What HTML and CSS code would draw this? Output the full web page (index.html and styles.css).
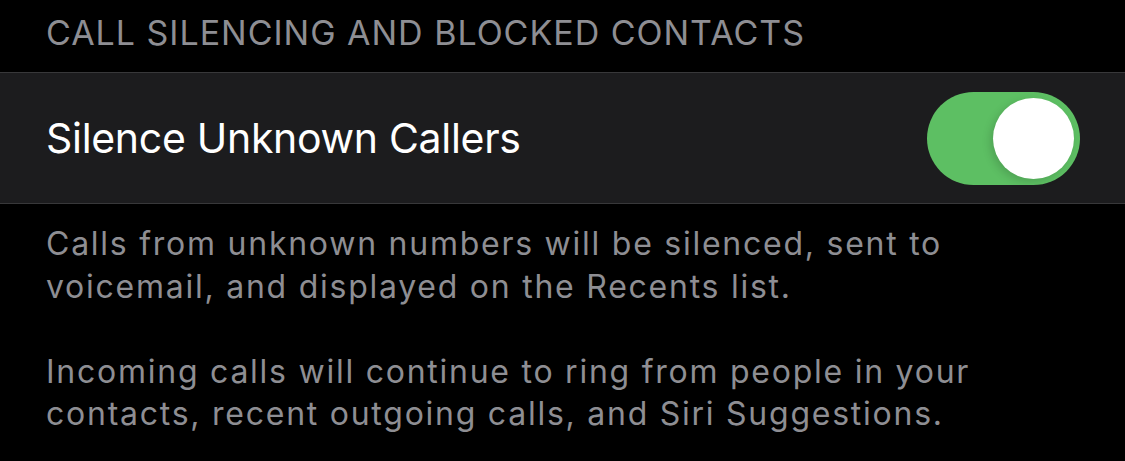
FILE: index.html
```html
<!DOCTYPE html>
<html lang="en">
<head>
    <meta charset="UTF-8">
    <meta name="viewport" content="width=device-width, initial-scale=1.0">
    <title>Phone - Silence Unknown Callers</title>
    <link rel="stylesheet" href="styles.css">
</head>
<body>
    <div class="group-header">CALL SILENCING AND BLOCKED CONTACTS</div>
    <div class="group">
        <div class="cell">
            <span class="cell-label">Silence Unknown Callers</span>
            <label class="switch">
                <input type="checkbox" checked>
                <span class="knob"></span>
            </label>
        </div>
    </div>
    <div class="group-footer">
        <p>Calls from unknown numbers will be silenced, sent to<br>voicemail, and displayed on the Recents list.</p>
        <p>Incoming calls will continue to ring from people in your<br>contacts, recent outgoing calls, and Siri Suggestions.</p>
    </div>
</body>
</html>
```

FILE: styles.css
```css
body, html {
    margin: 0;
    padding: 0;
    height: 100%;
    font-family: 'Inter', 'Roboto', sans-serif;
    background-color: #000;
    color: #fff;
    overflow: hidden;
}
.group-header {
    height: 72px;
    padding-left: 46px;
    box-sizing: border-box;
    padding-top: 13px;
    font-size: 34px;
    line-height: 40px;
    color: #8e8e93;
    letter-spacing: 0.98px;
    white-space: nowrap;
}
.group {
    background-color: #1c1c1e;
    border-top: 1px solid #38383a;
    border-bottom: 1px solid #38383a;
}
.cell {
    height: 130px;
    display: flex;
    align-items: center;
    justify-content: space-between;
    padding: 0 45px 0 46px;
}
.cell-label {
    font-size: 41px;
    letter-spacing: -0.3px;
}
.switch {
    position: relative;
    display: block;
    width: 153px;
    height: 93px;
}
.switch input {
    display: none;
}
.knob {
    position: absolute;
    inset: 0;
    background-color: #5dbf63;
    border-radius: 47px;
}
.knob::after {
    content: '';
    position: absolute;
    top: 6px;
    right: 6px;
    width: 81px;
    height: 81px;
    border-radius: 50%;
    background: #fff;
    box-shadow: -3px 3px 8px rgba(0, 0, 0, 0.15);
}
.group-footer {
    padding: 19px 46px 0;
    font-size: 32px;
    line-height: 42.6px;
    color: #8e8e93;
    letter-spacing: 1.75px;
    white-space: nowrap;
}
.group-footer p {
    margin: 0 0 42.6px;
}
```
